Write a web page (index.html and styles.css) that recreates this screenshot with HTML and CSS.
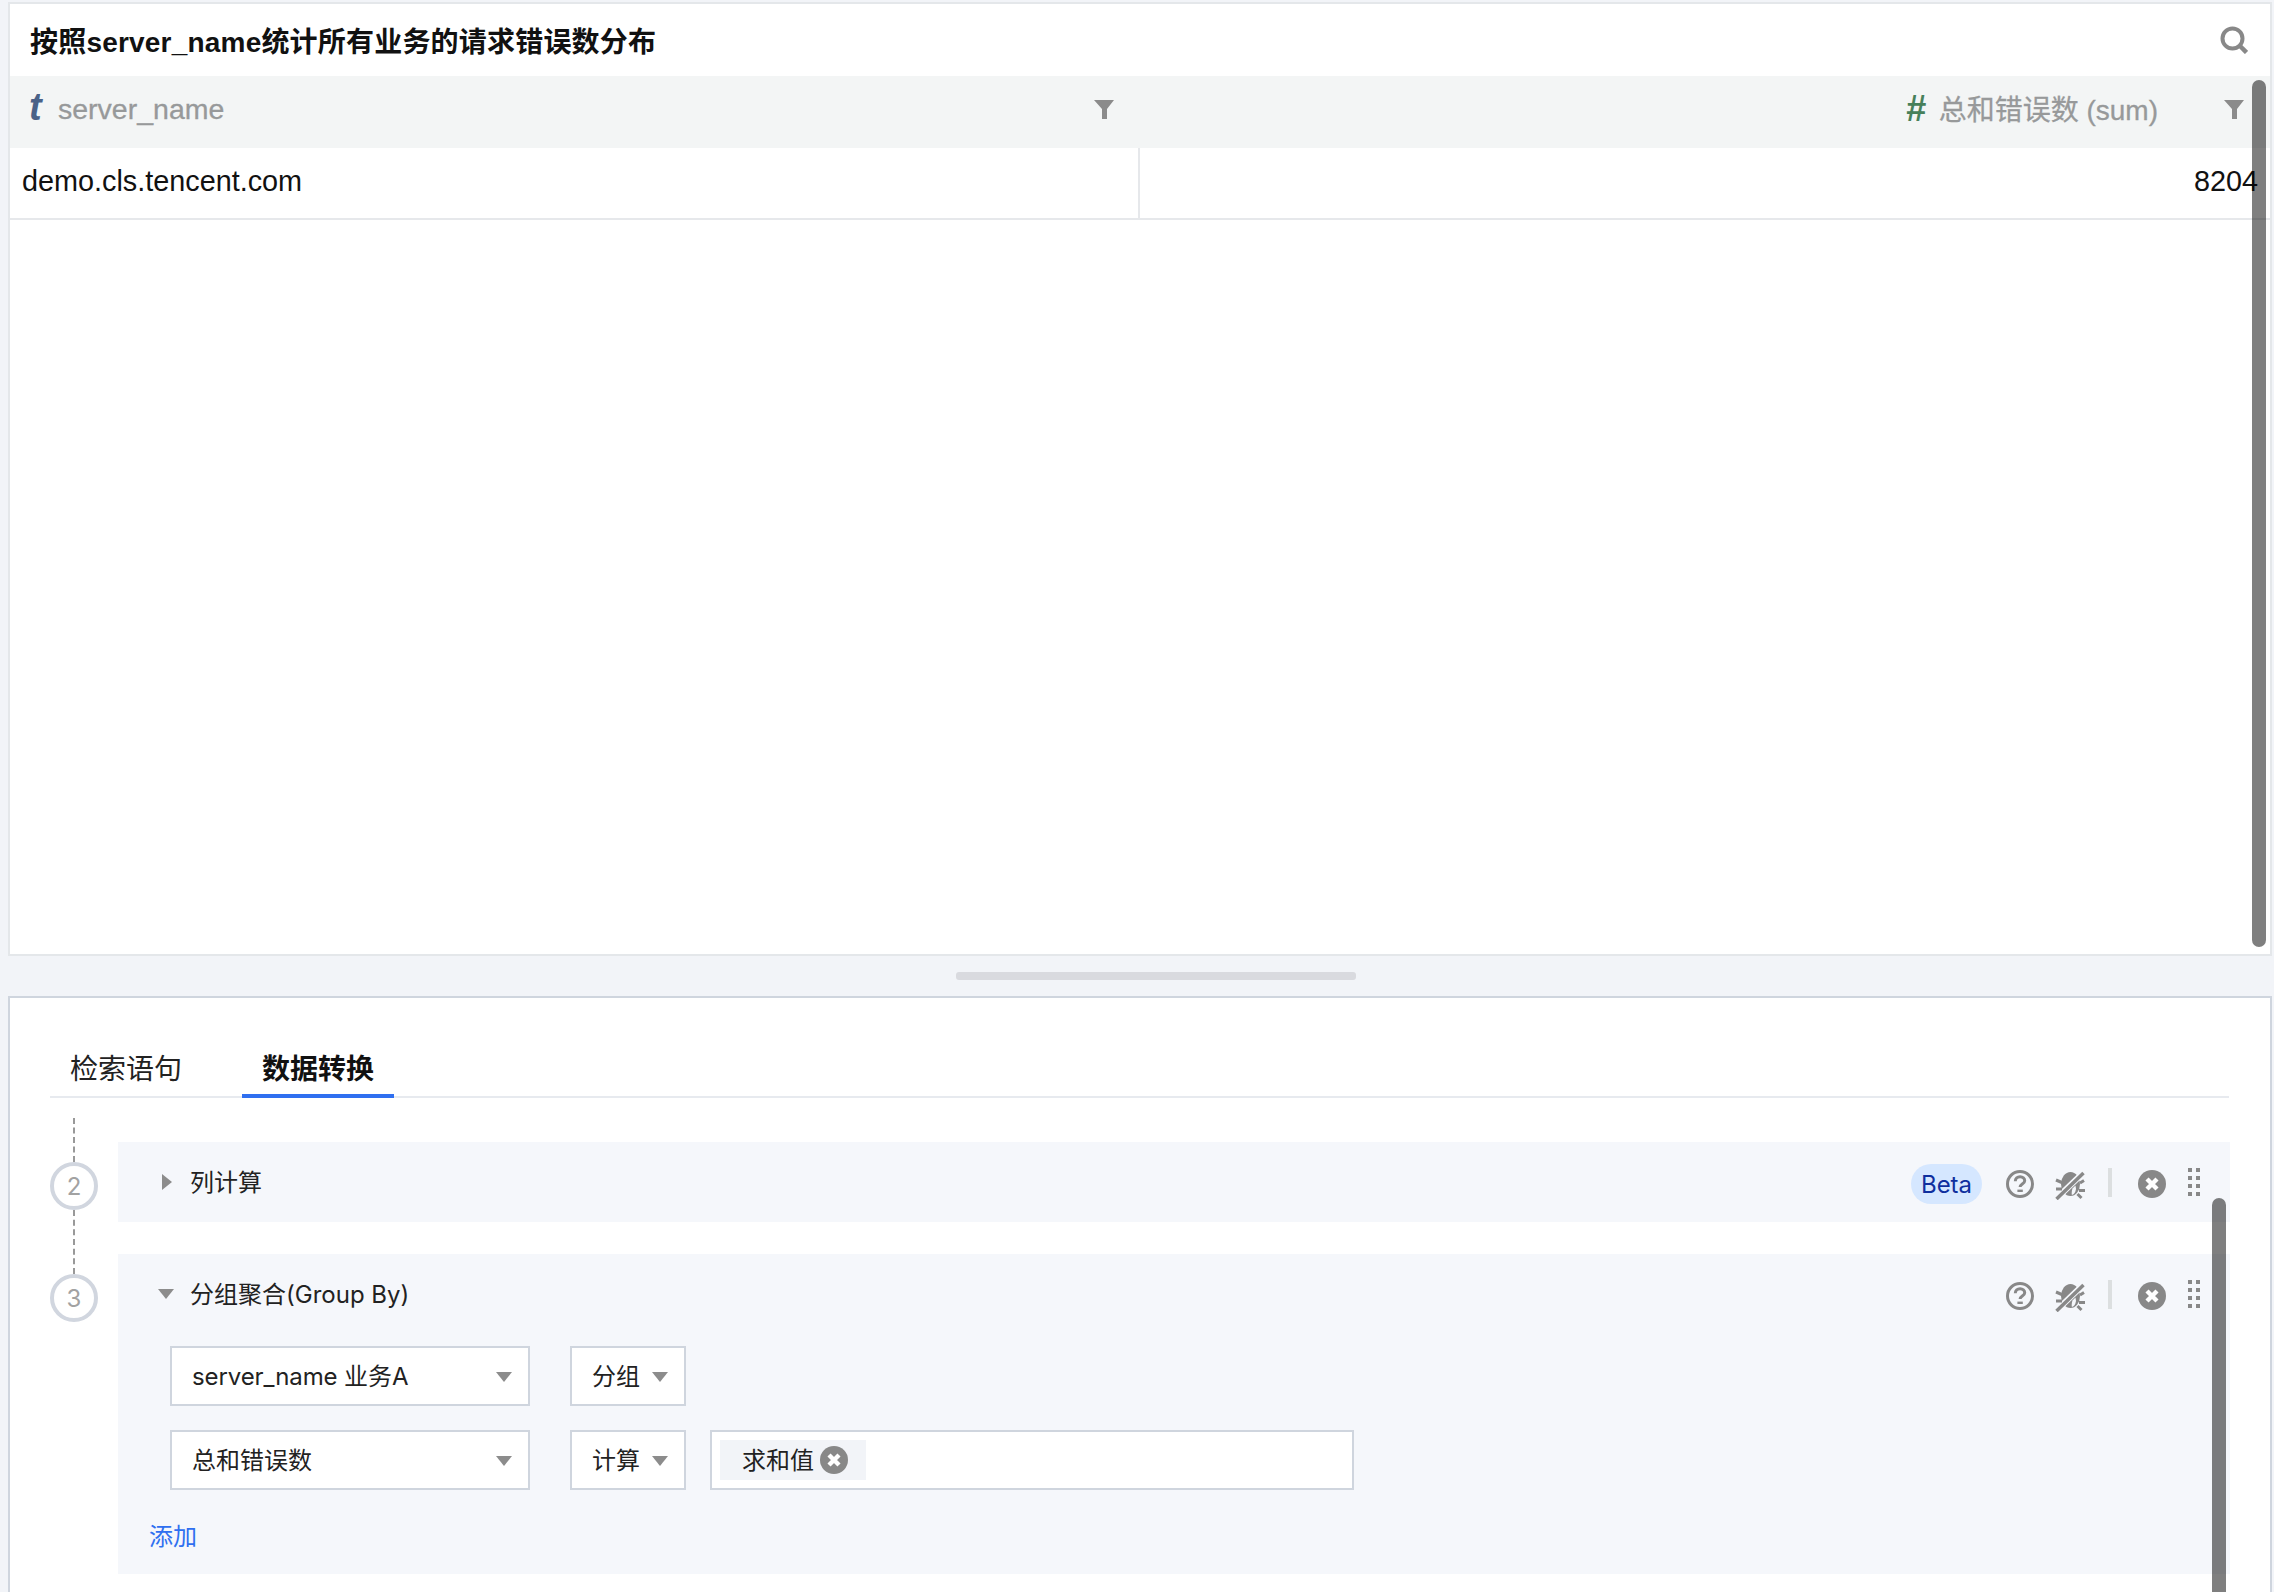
FILE: index.html
```html
<!DOCTYPE html>
<html lang="zh-CN">
<head>
<meta charset="utf-8">
<title>server_name</title>
<link rel="stylesheet" href="styles.css">
</head>
<body>
<svg class="defs" width="0" height="0" aria-hidden="true">
  <symbol id="i-help" viewBox="0 0 28 28">
    <circle cx="14" cy="14" r="12.500" fill="none" stroke="#888" stroke-width="3"/>
    <path d="M9.300 11.200c0-2.800 2.100-4.500 4.800-4.500s4.600 1.700 4.600 4c0 3.300-4.600 3.400-4.600 6.400" fill="none" stroke="#888" stroke-width="3"/>
    <rect x="11.400" y="19.600" width="5.400" height="2.400" fill="#888"/>
  </symbol>
  <symbol id="i-bug" viewBox="0 0 30 30">
    <ellipse cx="15.500" cy="14" rx="9.500" ry="12" fill="#888"/>
    <path d="M3 27L27 4" fill="none" stroke="#f5f7fb" stroke-width="6"/>
    <path d="M17.500 18.500c-.8 2.500-1 4.500-.6 6.500 2.300-.8 3.600-2.600 4.100-6l-.5-3.500z" fill="#f5f7fb"/>
    <path d="M1 10l7 3M1 19h6M25 13l4-2.500M24 20.500h6M22.500 24l4 4" fill="none" stroke="#888" stroke-width="3"/>
    <path d="M1.500 29L28.500 3" fill="none" stroke="#888" stroke-width="3.500"/>
  </symbol>
  <symbol id="i-close" viewBox="0 0 28 28">
    <circle cx="14" cy="14" r="14" fill="#888"/>
    <path d="M9 9l10 10M19 9L9 19" fill="none" stroke="#fff" stroke-width="4.400"/>
  </symbol>
  <symbol id="i-filter" viewBox="0 0 20 19">
    <path d="M0 0h20l-7 9v10H8V9z" fill="#8b8b8b"/>
  </symbol>
</svg>

<main class="page">
  <section class="result">
    <header class="result-title">
      <h1>按照server_name统计所有业务的请求错误数分布</h1>
      <svg class="search" viewBox="0 0 28 28"><circle cx="12.500" cy="12.500" r="10" fill="none" stroke="#888" stroke-width="4"/><path d="M19 19l7.500 7.500" fill="none" stroke="#888" stroke-width="4.500"/></svg>
    </header>
    <div class="table-head">
      <div class="th th-left">
        <span class="type type-t">t</span><span class="th-label">server_name</span>
        <svg class="filter filter-a"><use href="#i-filter"/></svg>
      </div>
      <div class="th th-right">
        <span class="type type-n">#</span><span class="th-label th-label-cjk">总和错误数 (sum)</span>
        <svg class="filter filter-b"><use href="#i-filter"/></svg>
      </div>
    </div>
    <div class="table-row">
      <div class="td td-left">demo.cls.tencent.com</div>
      <div class="td td-right">8204</div>
    </div>
    <div class="scroll scroll-top"></div>
  </section>

  <div class="gripper"><span class="grip"></span></div>

  <section class="editor">
    <nav class="tabs">
      <span class="tab">检索语句</span>
      <span class="tab tab-active">数据转换</span>
    </nav>
    <div class="steps">
      <div class="step">
        <div class="marker marker-first"><span class="num">2</span></div>
        <div class="card">
          <div class="card-head">
            <span class="tri tri-right"></span>
            <span class="card-name">列计算</span>
            <span class="tools">
              <span class="beta">Beta</span>
              <svg class="ic ic-help"><use href="#i-help"/></svg>
              <svg class="ic ic-bug"><use href="#i-bug"/></svg>
              <span class="sep"></span>
              <svg class="ic ic-close"><use href="#i-close"/></svg>
              <span class="dots"><i></i><i></i><i></i><i></i><i></i><i></i><i></i><i></i></span>
            </span>
          </div>
        </div>
      </div>
      <div class="step">
        <div class="marker marker-next"><span class="num">3</span></div>
        <div class="card card-open">
          <div class="card-head">
            <span class="tri tri-down"></span>
            <span class="card-name">分组聚合(Group By)</span>
            <span class="tools">
              <svg class="ic ic-help"><use href="#i-help"/></svg>
              <svg class="ic ic-bug"><use href="#i-bug"/></svg>
              <span class="sep"></span>
              <svg class="ic ic-close"><use href="#i-close"/></svg>
              <span class="dots"><i></i><i></i><i></i><i></i><i></i><i></i><i></i><i></i></span>
            </span>
          </div>
          <div class="form">
            <div class="form-row">
              <div class="select select-wide"><span class="sel-text sel-latin">server_name 业务A</span><span class="caret"></span></div>
              <div class="select select-small"><span class="sel-text">分组</span><span class="caret"></span></div>
            </div>
            <div class="form-row">
              <div class="select select-wide"><span class="sel-text">总和错误数</span><span class="caret"></span></div>
              <div class="select select-small"><span class="sel-text">计算</span><span class="caret"></span></div>
              <div class="multi">
                <span class="tag"><span class="sel-text">求和值</span><svg class="tag-x"><use href="#i-close"/></svg></span>
              </div>
            </div>
          </div>
          <a class="add">添加</a>
        </div>
      </div>
    </div>
    <div class="scroll scroll-bottom"></div>
  </section>
</main>
</body>
</html>
```
FILE: styles.css
```css
* { box-sizing: border-box; }
html, body { margin: 0; padding: 0; }
body {
  width: 2274px;
  height: 1592px;
  overflow: hidden;
  background: #f2f4f8;
  font-family: "Inter", "Noto Sans CJK SC", sans-serif;
  color: #1a1a1a;
}
.defs { position: absolute; }
.page {
  height: 1592px;
  display: flex;
  flex-direction: column;
  padding: 2px 2px 0 8px;
}

/* result table */
.result {
  position: relative;
  height: 954px;
  flex: none;
  background: #fff;
  border: 2px solid #e4e7ea;
  font-family: "Liberation Sans", "Noto Sans CJK SC", sans-serif;
}
.result-title {
  height: 72px;
  display: flex;
  align-items: center;
  justify-content: space-between;
  padding: 0 22px 0 20px;
}
.result-title h1 {
  margin: 0 0 1px;
  font-size: 28px;
  font-weight: 700;
  letter-spacing: 0.2px;
  color: #111;
}
.search { width: 28px; height: 28px; }
.table-head {
  height: 72px;
  display: flex;
  background: #f3f5f5;
}
.th {
  display: flex;
  align-items: center;
  padding-bottom: 5px;
  font-size: 28.500px;
  color: #97999a;
  -webkit-text-stroke: 0.3px #97999a;
}
.th-left { width: 1130px; padding-left: 19px; }
.th-right { flex: 1; justify-content: flex-end; padding-right: 26px; }
.th-label-cjk { font-size: 28px; margin-bottom: 4px; }
.type {
  font-family: "Liberation Sans", sans-serif;
  font-weight: 700;
  font-style: italic;
  -webkit-text-stroke: 0;
}
.type-t { width: 29px; font-size: 38px; color: #4a6288; margin-top: -4px; }
.type-n { width: 33px; font-size: 36px; color: #47805a; margin-bottom: 2px; }
.filter { width: 20px; height: 19px; }
.filter-a { margin-left: auto; margin-right: 26px; }
.filter-b { margin-left: 66px; }
.table-row {
  height: 72px;
  display: flex;
  border-bottom: 2px solid #e6e8eb;
  font-size: 28.800px;
  color: #111;
}
.td { display: flex; align-items: center; padding-bottom: 3px; }
.td-left { width: 1130px; padding-left: 12px; border-right: 2px solid #e6e8eb; }
.td-right { flex: 1; justify-content: flex-end; padding-right: 12px; }
.scroll {
  position: absolute;
  width: 14px;
  border-radius: 7px;
  background: rgba(0, 0, 0, 0.5);
}
.scroll-top { left: 2242px; top: 76px; height: 867px; }

/* gripper */
.gripper {
  flex: none;
  height: 40px;
  display: flex;
  align-items: center;
  padding-left: 948px;
}
.grip {
  width: 400px;
  height: 8px;
  border-radius: 3px;
  background: #d9dadf;
}

/* editor */
.editor {
  position: relative;
  flex: 1;
  min-height: 0;
  background: #fff;
  border: 2px solid #cfd5de;
  border-bottom: 0;
  overflow: hidden;
}
.tabs {
  display: flex;
  gap: 40px;
  height: 100px;
  padding-top: 40px;
  margin: 0 41px 0 40px;
  border-bottom: 2px solid #e7eaef;
}
.tab {
  width: 152px;
  height: 60px;
  text-align: center;
  font-size: 28px;
  line-height: 58px;
  font-family: "Noto Sans CJK SC", sans-serif;
  color: #222;
}
.tab-active {
  font-weight: 700;
  color: #111;
  border-bottom: 4px solid #2f6ff0;
}
.steps {
  display: flex;
  flex-direction: column;
  gap: 32px;
  margin: 44px 0 0 40px;
}
.step { display: flex; }
.marker { width: 68px; flex: none; }
.num {
  position: relative;
  display: flex;
  align-items: center;
  justify-content: center;
  width: 48px;
  height: 48px;
  margin-top: 20px;
  border: 4px solid #d1d6df;
  border-radius: 50%;
  font-size: 24px;
  color: #a2a2a2;
}
.marker-first .num::before,
.marker-next .num::before {
  content: "";
  position: absolute;
  left: 19px;
  bottom: 44px;
  border-left: 2px dashed #999;
}
.marker-first .num::before { height: 44px; }
.marker-next .num::before { height: 64px; }
.card {
  width: 2112px;
  flex: none;
  background: #f5f7fb;
}
.card-open { height: 320px; }
.card-head {
  height: 80px;
  display: flex;
  align-items: center;
  padding: 0 30px 0 40px;
}
.tri { width: 0; height: 0; flex: none; }
.tri-right {
  margin-left: 4px;
  margin-right: 18px;
  border-left: 10px solid #8c8c8c;
  border-top: 8px solid transparent;
  border-bottom: 8px solid transparent;
}
.tri-down {
  margin-right: 16px;
  border-top: 10px solid #8c8c8c;
  border-left: 8px solid transparent;
  border-right: 8px solid transparent;
}
.card-name { font-size: 24px; color: #222; margin-bottom: 3px; }
.tools { margin-left: auto; display: flex; align-items: center; }
.beta {
  width: 71px;
  height: 40px;
  margin-top: 4px;
  display: flex;
  align-items: center;
  justify-content: center;
  border-radius: 20px;
  background: #d5e7ff;
  color: #0f2f9e;
  font-size: 24px;
}
.ic { flex: none; display: block; margin-top: 4px; }
.ic-help { width: 28px; height: 28px; margin-left: 24px; }
.ic-bug { width: 30px; height: 30px; margin-left: 21px; margin-top: 6px; }
.sep { width: 4px; height: 29px; margin-left: 23px; background: #dcdfe0; }
.ic-close { width: 28px; height: 28px; margin-left: 26px; }
.dots {
  width: 12px;
  height: 28px;
  margin-left: 22px;
  display: grid;
  grid-template-columns: 4px 4px;
  grid-auto-rows: 4px;
  gap: 4px;
}
.dots i { background: #888; }
.form {
  display: flex;
  flex-direction: column;
  gap: 24px;
  margin: 12px 0 0 52px;
}
.form-row { display: flex; }
.select {
  position: relative;
  height: 60px;
  display: flex;
  align-items: center;
  padding-left: 20px;
  background: #fff;
  border: 2px solid #cfd5de;
  font-size: 24px;
  color: #222;
}
.sel-text { margin-bottom: 3px; }
.sel-latin { letter-spacing: -0.1px; }
.select-wide { width: 360px; }
.select-small { width: 116px; margin-left: 40px; }
.caret {
  position: absolute;
  right: 16px;
  top: 24px;
  border-top: 10px solid #8c8c8c;
  border-left: 8px solid transparent;
  border-right: 8px solid transparent;
}
.multi {
  width: 644px;
  height: 60px;
  margin-left: 24px;
  display: flex;
  align-items: center;
  padding-left: 8px;
  background: #fff;
  border: 2px solid #cfd5de;
}
.tag {
  width: 146px;
  height: 40px;
  display: flex;
  align-items: center;
  padding-left: 22px;
  background: #f2f4f8;
  font-size: 24px;
  color: #222;
}
.tag-x { width: 28px; height: 28px; margin-left: 6px; flex: none; }
.add {
  display: block;
  margin: 27px 0 0 31px;
  font-size: 24px;
  color: #2f6ff0;
}
.scroll-bottom { left: 2202px; top: 200px; height: 500px; border-radius: 7px 7px 0 0; }
```
